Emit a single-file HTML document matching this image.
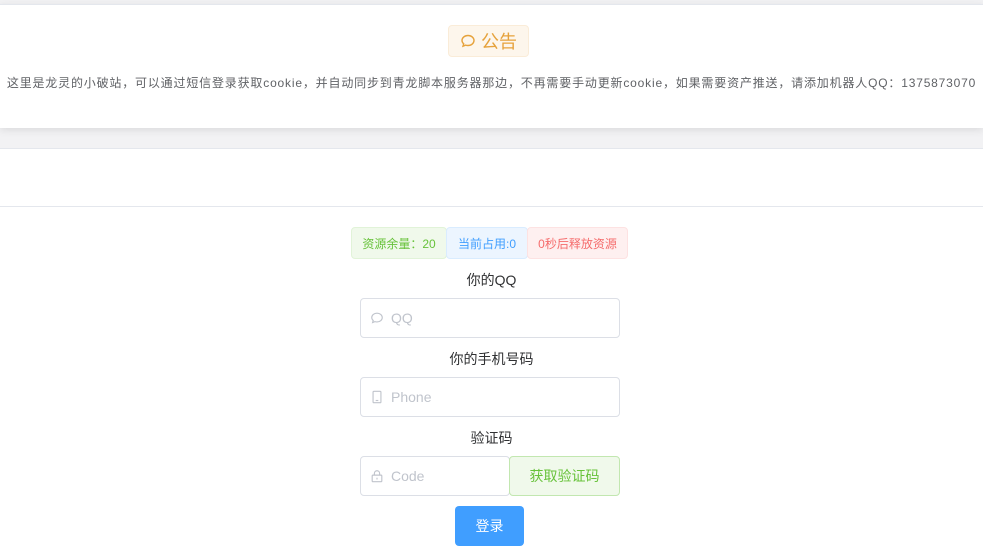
<!DOCTYPE html>
<html><head><meta charset="utf-8"><style>
*{box-sizing:border-box;margin:0;padding:0}
body{width:983px;height:553px;overflow:hidden;background:#fff;font-family:"Liberation Sans","Noto Sans CJK SC",sans-serif;position:relative}
.a{position:absolute}
.lbl{position:absolute;width:983px;text-align:center;font-size:14px;color:#303133}
.inp{position:absolute;border:1px solid #dcdfe6;border-radius:4px;background:#fff;color:#c0c4cc;font-size:14px;display:flex;align-items:center;padding-left:9px}
.inp svg{margin-right:7px}
.tag{position:absolute;top:227px;height:32px;font-size:12px;display:flex;align-items:center;justify-content:center;border:1px solid;border-radius:4px;white-space:nowrap}
</style></head><body>
<div class="a" style="left:0;top:0;width:983px;height:148px;background:#f2f2f4"></div>
<div class="a" style="left:0;top:4px;width:983px;height:124px;background:#fff;border-top:1px solid #e4e7ed;box-shadow:0 2px 8px rgba(0,0,0,.1)"></div>
<div class="a" style="left:448px;top:25px;width:81px;height:32px;background:#fdf6ec;border:1px solid #faecd8;border-radius:4px;color:#e6a23c;font-size:18px;display:flex;align-items:center;justify-content:center">
<svg width="16" height="16" viewBox="0 0 16 16" style="margin-right:5px"><path d="M8 2.5c3.3 0 6 2.2 6 5s-2.7 5-6 5c-.8 0-1.6-.1-2.3-.4L3 13.2l.7-2.4C2.6 9.9 2 8.8 2 7.5c0-2.8 2.7-5 6-5z" fill="none" stroke="#e6a23c" stroke-width="1.4"/></svg>公告</div>
<div class="a" style="left:0;top:74px;width:983px;text-align:center;font-size:12px;color:#606266;white-space:nowrap;letter-spacing:0.82px">这里是龙灵的小破站，可以通过短信登录获取cookie，并自动同步到青龙脚本服务器那边，不再需要手动更新cookie，如果需要资产推送，请添加机器人QQ：1375873070</div>
<div class="a" style="left:0;top:148px;width:983px;height:59px;background:#fff;border-top:1px solid #e4e7ed;border-bottom:1px solid #e4e7ed"></div>
<div class="tag" style="left:351px;width:96px;background:#f0f9eb;border-color:#e1f3d8;color:#67c23a">资源余量：20</div>
<div class="tag" style="left:446px;width:82px;background:#ecf5ff;border-color:#d9ecff;color:#409eff">当前占用:0</div>
<div class="tag" style="left:527px;width:101px;background:#fef0f0;border-color:#fde2e2;color:#f56c6c">0秒后释放资源</div>
<div class="lbl" style="top:270px">你的QQ</div>
<div class="inp" style="left:360px;top:298px;width:260px;height:40px"><svg width="14" height="14" viewBox="0 0 16 16"><path d="M8 2.5c3.3 0 6 2.2 6 5s-2.7 5-6 5c-.8 0-1.6-.1-2.3-.4L3 13.2l.7-2.4C2.6 9.9 2 8.8 2 7.5c0-2.8 2.7-5 6-5z" fill="none" stroke="#c0c4cc" stroke-width="1.3"/></svg>QQ</div>
<div class="lbl" style="top:349px">你的手机号码</div>
<div class="inp" style="left:360px;top:377px;width:260px;height:40px"><svg width="14" height="14" viewBox="0 0 16 16"><rect x="3.5" y="1.5" width="9" height="13" rx="1" fill="none" stroke="#c0c4cc" stroke-width="1.3"/><path d="M6.5 12h3" stroke="#c0c4cc" stroke-width="1.3"/></svg>Phone</div>
<div class="lbl" style="top:428px">验证码</div>
<div class="inp" style="left:360px;top:456px;width:150px;height:40px"><svg width="14" height="14" viewBox="0 0 16 16"><rect x="2.5" y="7" width="11" height="7.5" rx="1" fill="none" stroke="#c0c4cc" stroke-width="1.3"/><path d="M5 7V5a3 3 0 0 1 6 0v2M8 10v2" fill="none" stroke="#c0c4cc" stroke-width="1.3"/></svg>Code</div>
<div class="a" style="left:509px;top:456px;width:111px;height:40px;background:#f0f9eb;border:1px solid #c2e7b0;border-radius:4px;color:#67c23a;font-size:14px;display:flex;align-items:center;justify-content:center">获取验证码</div>
<div class="a" style="left:455px;top:506px;width:69px;height:40px;background:#409eff;border-radius:4px;color:#fff;font-size:14px;display:flex;align-items:center;justify-content:center">登录</div>
</body></html>
